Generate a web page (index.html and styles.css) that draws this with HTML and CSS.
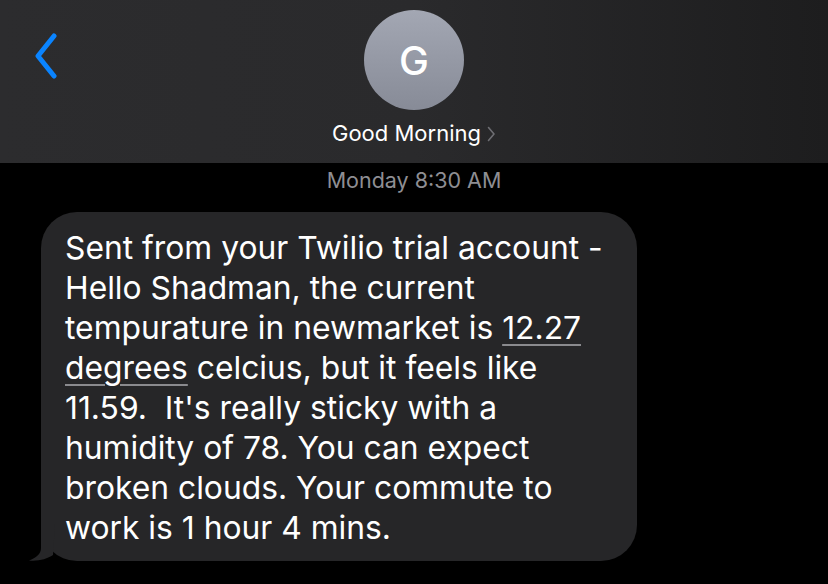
FILE: index.html
```html
<!DOCTYPE html>
<html>
<head>
<meta charset="utf-8">
<link rel="stylesheet" href="styles.css">
</head>
<body>
<div class="screen">
  <header class="header">
    <div class="back">
      <svg width="26" height="46" viewBox="0 0 26 46"><path d="M21 3 L5 23 L21 43" fill="none" stroke="#0a84ff" stroke-width="5" stroke-linecap="round" stroke-linejoin="round"/></svg>
    </div>
    <div class="contact">
      <div class="avatar">G</div>
      <div class="name">Good Morning<span class="chev">
        <svg width="9" height="16" viewBox="0 0 9 16"><path d="M1.5 1.5 L7 8 L1.5 14.5" fill="none" stroke="#6e6e73" stroke-width="1.6" stroke-linecap="round" stroke-linejoin="round"/></svg></span></div>
    </div>
  </header>
  <div class="time"><span class="day">Monday</span> 8:30 AM</div>
  <div class="thread">
    <div class="bubble">
      <p class="msg">Sent from your Twilio trial account -<br>Hello Shadman, the current<br>tempurature in newmarket is <span class="link">12.27</span><br><span class="link">degrees</span> celcius, but it feels like<br>11.59.&nbsp; It's really sticky with a<br>humidity of 78. You can expect<br>broken clouds. Your commute to<br>work is 1 hour 4 mins.</p>
      <svg class="tail" width="30" height="37" viewBox="0 0 30 37"><path d="M12 0 L12 24 C12 30 7 34 0 36.5 C9 37.5 18 35 24 31 L26 0 Z" fill="#262628"/></svg>
    </div>
  </div>
</div>
</body>
</html>
```

FILE: styles.css
```css
* { box-sizing: border-box; }
html, body { margin: 0; padding: 0; background: #000; }
body { width: 828px; height: 584px; overflow: hidden; font-family: Inter, "Noto Sans", sans-serif; color: #fff; }
.screen { width: 828px; height: 584px; display: flex; flex-direction: column; }
.header {
  height: 163px;
  background: linear-gradient(90deg, #2c2c2e 0%, #2a2a2c 50%, #1d1d1e 100%);
  display: flex;
  position: relative;
}
.back { position: absolute; left: 33px; top: 33px; }
.back svg { display: block; }
.contact { flex: 1; display: flex; flex-direction: column; align-items: center; padding-top: 10px; }
.avatar {
  width: 100px; height: 100px; border-radius: 50%;
  background: linear-gradient(180deg, #a3a7b3 0%, #878b97 100%);
  display: flex; align-items: center; justify-content: center;
  font-size: 40px; font-weight: 500; color: #fff;
}
.name { margin-top: 10px; font-size: 22px; line-height: 26px; color: #fff; display: flex; align-items: center; }
.chev { margin-left: 6px; display: flex; padding-top: 2px; }
.time { text-align: center; font-size: 21.5px; line-height: 24px; color: #8e8e93; padding-top: 5px; }
.thread { padding: 20px 0 0 41px; }
.bubble { position: relative; width: 596px; background: #262628; border-radius: 36px; padding: 16px 10px 13px 24px; }
.msg { margin: 0; font-size: 31.8px; line-height: 40px; white-space: nowrap; position: relative; z-index: 1; }
.link { text-decoration: underline; text-decoration-color: #8a8a8e; text-decoration-thickness: 2px; text-underline-offset: 5px; }
.tail { position: absolute; left: -12px; bottom: 0; }
```
